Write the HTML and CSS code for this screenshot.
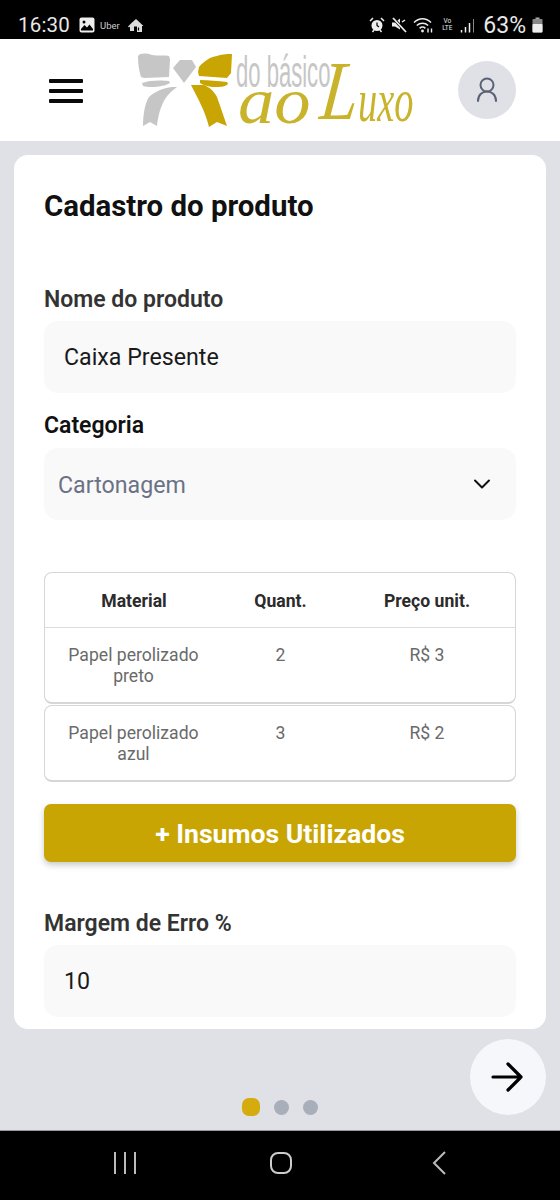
FILE: index.html
```html
<!DOCTYPE html>
<html lang="pt">
<head>
<meta charset="utf-8">
<title>Cadastro do produto</title>
<link rel="stylesheet" href="styles.css">
</head>
<body>
<div class="phone">
  <div class="status">
    <div class="status-left">
      <span class="clock">16:30</span>
      <svg class="ic" width="16" height="16" viewBox="0 0 16 16"><rect x="0.500" y="0.500" width="15" height="15" rx="2" fill="#eee"/><path d="M2 12l3.500-4 2.500 2.500 2.500-3 3.500 4.500v1.500H2z" fill="#000"/><circle cx="5" cy="5" r="1.500" fill="#000"/></svg>
      <span class="uber">Uber</span>
      <svg class="ic" width="17" height="15" viewBox="0 0 17 15"><path d="M9 1L4.500 5 1 8.500l1 1 1-1V13h4V8.500h3V14h5V8h1.500z" fill="#ddd"/><path d="M11.500 9.500v3" stroke="#000" stroke-width="1.200"/></svg>
    </div>
    <div class="status-right">
      <svg class="ic" width="16" height="16" viewBox="0 0 16 16"><circle cx="8" cy="8.500" r="5.500" fill="#eee"/><path d="M8 5.500v3l2 1.500" stroke="#000" stroke-width="1.200" fill="none"/><path d="M1 4l3-3M15 4l-3-3M3.500 15l1.500-2M12.500 15l-1.500-2" stroke="#eee" stroke-width="1.500"/></svg>
      <svg class="ic" width="16" height="16" viewBox="0 0 16 16"><path d="M1 5.500h3l5-4v11l-5-3H1z" fill="#eee"/><path d="M2 1l13 14" stroke="#000" stroke-width="3"/><path d="M2 1l13 14" stroke="#eee" stroke-width="1.800"/><path d="M11 5l3-2" stroke="#eee" stroke-width="1.500"/></svg>
      <svg class="ic" width="21" height="16" viewBox="0 0 21 16"><path d="M1 5.500c5-5 12-5 17 0M3.800 8.500c3.200-3 8.200-3 11.400 0M6.600 11.300c1.800-1.500 4-1.500 5.800 0" stroke="#eee" stroke-width="1.500" fill="none"/><circle cx="9.500" cy="14" r="1.400" fill="#eee"/><path d="M15 15.500v-4M18.500 11.500v4" stroke="#eee" stroke-width="1.400"/></svg>
      <span class="volte">Vo<br>LTE</span>
      <svg class="ic" width="15" height="15" viewBox="0 0 15 15"><path d="M1.500 12v2.500M5.500 9v5.500M9.500 5v9.500" stroke="#eee" stroke-width="1.500"/><path d="M13.500 1v13.500" stroke="#888" stroke-width="1"/></svg>
      <span class="battery-text">63%</span>
      <svg class="ic" width="11" height="16" viewBox="0 0 11 16"><rect x="3.500" y="0.500" width="4" height="2" fill="#aaa"/><rect x="0.500" y="2" width="10" height="13.500" rx="1" fill="#888"/><rect x="0.500" y="7" width="10" height="8.500" rx="1" fill="#eee"/></svg>
    </div>
  </div>

  <header class="topbar">
    <button class="menu" aria-label="Menu"><span></span><span></span><span></span></button>
    <div class="logo">
      <svg class="bow" width="94" height="78" viewBox="0 0 94 78">
        <path d="M0 6C2 3 8 3 14 5c5 1 14 0 17 1l1 3-1 18-25 1-3-1C1 21 0 14 0 6z" fill="#c6c6c6"/>
        <path d="M4 33c7-3 20-3 27-2l1 2-4 2c-7 2-17 3-23 1z" fill="#c6c6c6"/>
        <path d="M34 37c-9 1-18 5-23 10C7 53 5 64 5 76l7-4 7 4c1-11 4-20 8-27 3-5 8-9 12-12z" fill="#c6c6c6"/>
        <path d="M35 18l7-8h12l4 7-12 16z" fill="#c6c6c6"/>
        <path d="M61 17c5-6 11-10 18-11 6-2 12-2 15-2l-1 19-4 5-28-2-1-4z" fill="#c9a504"/>
        <path d="M62 30c9 0 18 1 27 2l1 2c-3 3-8 3-13 3-6 0-12-2-15-4z" fill="#c9a504"/>
        <path d="M53 35h13c5 2 10 6 13 12l10 29-10-4-8 5c-2-8-5-16-8-22-3-7-7-14-10-20z" fill="#c9a504"/>
      </svg>
      <div class="logo-text">
        <span class="logo-top">do básico</span>
        <span class="logo-bottom"><span class="lb-ao">ao</span><span class="lb-l">L</span><span class="lb-uxo">uxo</span></span>
      </div>
    </div>
    <button class="avatar" aria-label="Perfil">
      <svg width="28" height="30" viewBox="0 0 28 30" fill="none" stroke="#5b6275" stroke-width="2" stroke-linecap="round"><circle cx="14" cy="10" r="6.500"/><path d="M5 26c0-6 4-9.500 9-9.500s9 3.500 9 9.500"/></svg>
    </button>
  </header>

  <main class="content">
    <section class="card">
      <h1 class="title">Cadastro do produto</h1>
      <label class="label first">Nome do produto</label>
      <div class="field">Caixa Presente</div>
      <label class="label cat">Categoria</label>
      <div class="field select">
        <span class="select-value">Cartonagem</span>
        <svg width="20" height="12" viewBox="0 0 20 12" fill="none" stroke="#111" stroke-width="2" stroke-linecap="round" stroke-linejoin="round"><path d="M3 2.500l7 7 7-7"/></svg>
      </div>
      <div class="table">
        <div class="tbox">
          <div class="row head"><span>Material</span><span>Quant.</span><span>Preço unit.</span></div>
          <div class="row body"><span>Papel perolizado preto</span><span>2</span><span>R$ 3</span></div>
        </div>
        <div class="tbox">
          <div class="row body last"><span>Papel perolizado azul</span><span>3</span><span>R$ 2</span></div>
        </div>
      </div>
      <button class="add">+ Insumos Utilizados</button>
      <label class="label margin">Margem de Erro %</label>
      <div class="field">10</div>
    </section>
    <div class="pager-area">
      <div class="dots"><i class="dot active"></i><i class="dot"></i><i class="dot"></i></div>
      <button class="next" aria-label="Próximo">
        <svg width="36" height="36" viewBox="0 0 36 36" fill="none" stroke="#000" stroke-width="3.200" stroke-linecap="round" stroke-linejoin="round"><path d="M3 18h28M18 5l13 13-13 13"/></svg>
      </button>
    </div>
  </main>

  <nav class="navbar">
    <svg width="24" height="24" viewBox="0 0 24 24" stroke="#bbb" stroke-width="2"><path d="M2 1v22M12 1v22M22 1v22"/></svg>
    <svg class="nav-home" width="24" height="24" viewBox="0 0 24 24" fill="none" stroke="#ccc" stroke-width="2"><rect x="2" y="2" width="20" height="20" rx="7"/></svg>
    <svg class="nav-back" width="16" height="26" viewBox="0 0 16 26" fill="none" stroke="#bbb" stroke-width="2"><path d="M14 2L3 13l11 11"/></svg>
  </nav>
</div>
</body>
</html>
```
FILE: styles.css
```css
* { box-sizing: border-box; }
html, body { margin: 0; padding: 0; }
body { width: 560px; height: 1200px; overflow: hidden; font-family: Roboto, "Liberation Sans", sans-serif; background: #dfe1e6; }
button { border: 0; padding: 0; font-family: inherit; }
.phone { width: 560px; height: 1200px; display: flex; flex-direction: column; }
.status { height: 39px; flex: none; background: #000; color: #e8e8e8; display: flex; justify-content: space-between; align-items: center; padding: 11px 17px 0 18px; }
.status-left, .status-right { display: flex; align-items: center; }
.status-left { gap: 8px; }
.status-right { gap: 6px; }
.clock { font-size: 20.500px; letter-spacing: 0.2px; margin-right: 1px; }
.uber { font-size: 9.500px; margin: 0 -1px 0 -3px; color: #ccc; }
.volte { font-size: 6.500px; line-height: 7px; text-align: center; width: 14px; }
.battery-text { font-size: 23px; margin-left: 2px; }
.ic { display: block; flex: none; }
.topbar { height: 102px; flex: none; background: #fff; display: flex; align-items: center; padding: 0 44px 0 49px; position: relative; }
.menu { width: 34px; height: 24px; background: none; display: flex; flex-direction: column; justify-content: space-between; flex: none; margin-top: 1px; }
.menu span { display: block; height: 4px; background: #0a0a0a; border-radius: 1px; }
.logo { display: flex; align-items: flex-start; margin-left: 55px; width: 276px; height: 78px; align-self: flex-start; margin-top: 11px; }
.bow { flex: none; }
.logo-text { position: relative; width: 180px; height: 78px; flex: none; }
.logo-top { position: absolute; left: 4px; top: -3px; font-family: "Liberation Sans", sans-serif; font-size: 45px; line-height: 50px; color: #c6c6c6; transform-origin: left top; transform: scaleX(0.49); white-space: nowrap; }
.logo-bottom { position: absolute; left: 6px; top: 0; height: 78px; width: 175px; font-family: "Liberation Serif", serif; font-style: italic; color: #c9b32a; white-space: nowrap; }
.logo-bottom span { position: absolute; display: block; transform-origin: left bottom; }
.lb-ao { left: 0; bottom: -8px; font-size: 66px; line-height: 70px; transform: scaleX(1.100); }
.lb-l { left: 79px; bottom: -5px; font-size: 84px; line-height: 84px; transform: scaleX(0.8) skewX(-8deg); }
.lb-uxo { left: 120px; bottom: -7px; font-size: 62px; line-height: 70px; transform: scaleX(0.62); }
.avatar { width: 58px; height: 58px; border-radius: 50%; background: #dfe1e7; flex: none; margin-left: auto; display: flex; align-items: center; justify-content: center; }
.content { flex: 1; display: flex; flex-direction: column; padding: 14px 14px 0; min-height: 0; }
.card { background: #fff; border-radius: 14px; height: 874px; flex: none; padding: 34px 30px 0 30px; }
.title { margin: 0; font-size: 29.400px; line-height: 34px; font-weight: 700; color: #111; }
.label { display: block; font-size: 23px; line-height: 26px; font-weight: 600; color: #333; margin-bottom: 9px; }
.label.first { margin-top: 64px; margin-bottom: 8px; }
.label.cat { margin-top: 20px; color: #111; }
.label.margin { margin-top: 49px; margin-bottom: 8px; }
.field { height: 72px; background: #f9f9fa; border-radius: 14px; display: flex; align-items: center; padding: 0 20px; font-size: 23.200px; color: #1a1a1a; }
.select { justify-content: space-between; padding: 0 24px 0 14px; color: #6b7285; }
.select-value { padding-top: 2px; }
.table { margin-top: 52px; display: flex; flex-direction: column; gap: 1px; }
.tbox { border: 1.500px solid #d6d6d8; border-bottom-width: 2px; border-radius: 8px; background: #fff; }
.row { display: grid; grid-template-columns: 177px 117px 1fr; text-align: center; }
.row.head { height: 55px; padding-top: 1px; align-items: center; font-size: 17.600px; font-weight: 700; color: #2b2b2b; border-bottom: 1.500px solid #dcdcde; }
.row.head span:first-child { padding: 0 0 0 1px; }
.row.body { height: 73.500px; padding-top: 17px; font-size: 17.600px; line-height: 21px; color: #6a6a6a; }
.row.body.last { height: 74.500px; }
.row.body span:first-child { padding: 0 12px; }
.add { display: block; width: 100%; height: 58px; margin-top: 22px; padding-top: 1px; background: #c9a504; color: #fff; font-size: 26.600px; font-weight: 700; border-radius: 7px; box-shadow: 0 3px 6px rgba(0,0,0,.22); }
.pager-area { flex: 1; position: relative; }
.dots { position: absolute; left: 228px; top: 69px; display: flex; align-items: center; gap: 14px; }
.dot { display: block; width: 15px; height: 15px; border-radius: 50%; background: #a9aebb; }
.dot.active { width: 18px; height: 18px; border-radius: 7px; background: #d4ac0d; }
.next { position: absolute; right: 0; top: 10px; width: 76px; height: 76px; border-radius: 50%; background: #f6f7fa; display: flex; align-items: center; justify-content: center; }
.navbar { height: 70px; flex: none; background: #000; display: flex; align-items: center; padding: 0 0 6px 113px; border-top: 1px solid #9a9a9a; }
.nav-home { margin-left: 132px; }
.nav-back { margin-left: 138px; }
```
